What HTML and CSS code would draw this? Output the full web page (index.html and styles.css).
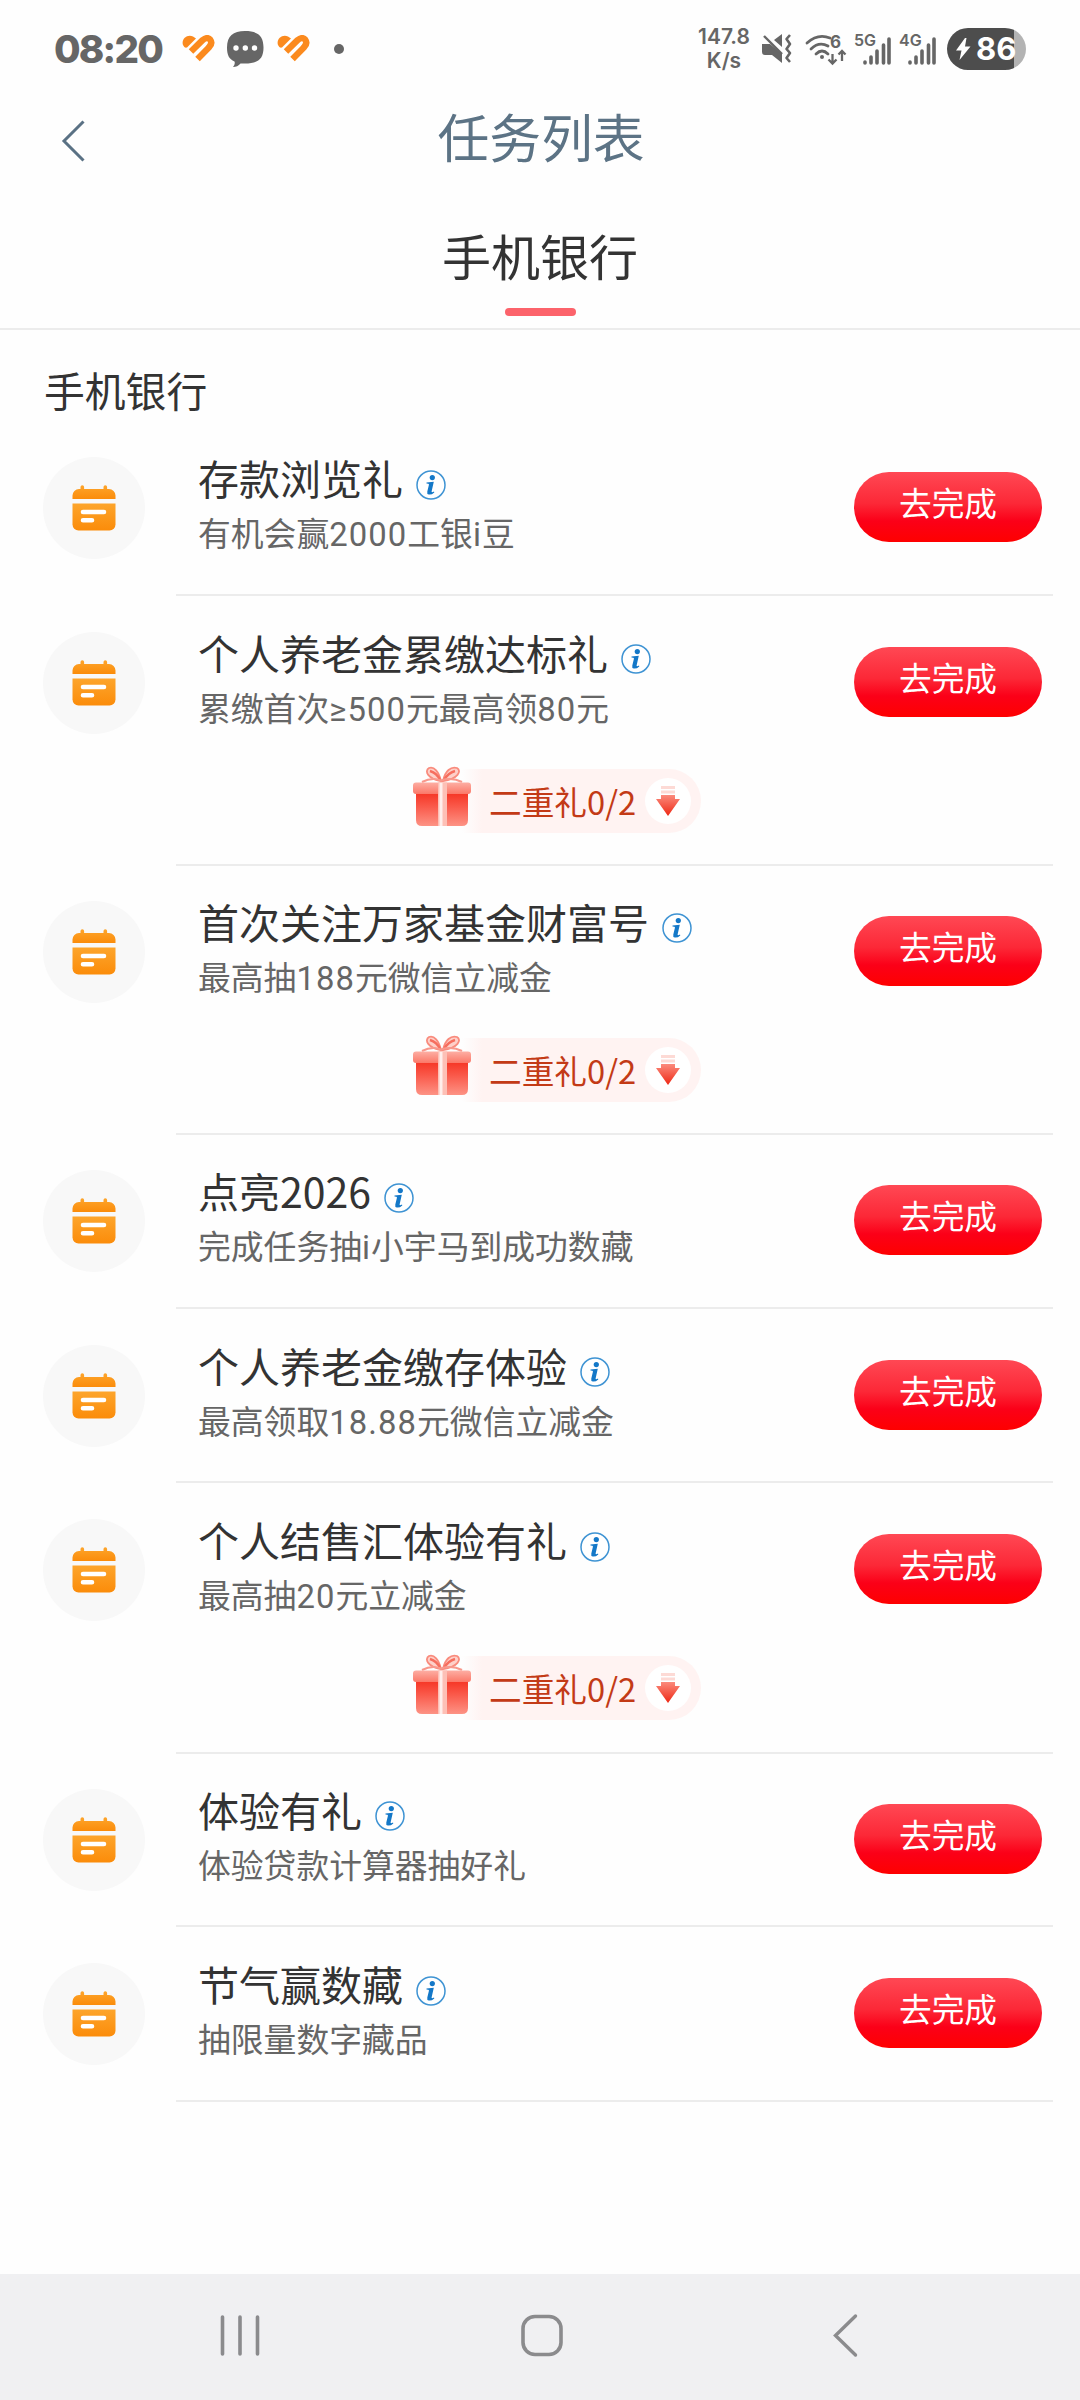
FILE: index.html
```html
<!DOCTYPE html>
<html lang="zh-CN">

<head>
    <meta charset="UTF-8">
    <meta name="viewport" content="width=device-width, initial-scale=1.0">
    <title>任务列表</title>
    <link rel="stylesheet" href="styles.css">
</head>

<body>
    <!-- 公用图标 -->
    <svg class="defs" width="0" height="0">
        <defs>
            <linearGradient id="orange" x1="0" y1="0" x2="0" y2="1">
                <stop offset="0" stop-color="#fda52c" />
                <stop offset="1" stop-color="#fb8c0a" />
            </linearGradient>
            <linearGradient id="box" x1="0" y1="0" x2="0" y2="1">
                <stop offset="0" stop-color="#f5301f" />
                <stop offset="0.45" stop-color="#fa5a4b" />
                <stop offset="1" stop-color="#fd9385" />
            </linearGradient>
            <linearGradient id="lid" x1="0" y1="0" x2="0" y2="1">
                <stop offset="0" stop-color="#fdaea3" />
                <stop offset="1" stop-color="#fb7868" />
            </linearGradient>
            <linearGradient id="arrow" x1="0" y1="0" x2="0" y2="1">
                <stop offset="0" stop-color="#fb8a7c" />
                <stop offset="1" stop-color="#ee2814" />
            </linearGradient>
        </defs>
        <symbol id="heart" viewBox="0 0 33 28">
            <path d="M1 10C-1 4 5-1 11 1.500L14 3.500 5 12.500C3 13 2 12 1 10Z" fill="#fb8a1e" />
            <path d="M9 16.500L20.500 5.200Q25.500 1.200 28.300 4.800Q30.800 8.200 27 12.200L15.500 24" fill="none" stroke="#fb8a1e" stroke-width="6.400" />
            <path d="M12.800 20.600L23 10.300" stroke="#fff" stroke-width="1.800" stroke-linecap="round" />
        </symbol>
        <symbol id="calendar" viewBox="0 0 46 46">
            <path d="M9.500 6V2a1.800 1.800 0 0 1 3.600 0V4H32.500V2a1.800 1.800 0 0 1 3.600 0V4H38a6.500 6.500 0 0 1 6.500 6.500V14H1.500V10.500A6.500 6.500 0 0 1 8 4H9.500Z" fill="url(#orange)" />
            <path d="M1.500 18.500H44.500V39.500A6 6 0 0 1 38.500 45.500H7.500A6 6 0 0 1 1.500 39.500Z" fill="url(#orange)" />
            <path d="M12 27H33M12 35.200H21" stroke="#fff" stroke-width="4.600" stroke-linecap="round" />
        </symbol>
        <symbol id="info" viewBox="0 0 30 30">
            <circle cx="15" cy="15" r="14" fill="#fff" stroke="#3e93d3" stroke-width="1.500" />
            <circle cx="16.300" cy="7.600" r="2.600" fill="#1478c8" />
            <path d="M10.500 12.600L17.800 11.800 15.600 21.500Q15.500 22.800 18 21.600L18.300 22.400Q15.500 25 12.700 24.500 10.700 24 11.300 21.500L13 14.500Q13 13.600 10.500 13.500Z" fill="#1478c8" />
        </symbol>
        <symbol id="gift" viewBox="0 0 60 62">
            <path d="M29 15C16 13 12 5 17 2C22 0 27 6 29 15ZM31 15C33 5 39 0 45 2C50 5 46 13 31 15Z" fill="#fed0c9" stroke="#f98b7d" stroke-width="1.800" />
            <path d="M18 5Q25 7 28 14M43 5Q36 7 32 14" fill="none" stroke="#f66e5e" stroke-width="2.500" />
            <path d="M10 16Q20 11 29 14.500Q40 11 50 16" fill="none" stroke="#f8988c" stroke-width="2" />
            <path d="M4 25H56V54Q56 60 50 60H10Q4 60 4 54Z" fill="url(#box)" />
            <rect x="1" y="16.500" width="58" height="11.500" rx="3" fill="url(#lid)" />
            <rect x="26" y="16.500" width="9" height="43.500" fill="#fdc0b6" />
            <path d="M29 17V60" stroke="#ffefec" stroke-width="3" />
        </symbol>
        <symbol id="down" viewBox="0 0 24 32">
            <path d="M5 1H19V4H5ZM5 5.500H19V8.500H5Z" fill="#fddad5" />
            <path d="M5 10H19V14H24L12 31 0 14H5Z" fill="url(#arrow)" />
        </symbol>
    </svg>

    <div class="status-bar">
        <div class="status-left">
            <span class="time">08:20</span>
            <svg class="heart" width="33" height="28"><use href="#heart" /></svg>
            <svg class="chat" width="37" height="37" viewBox="0 0 37 37">
                <path d="M18 0C31 0 36.500 5 36.500 16.500S31 32.500 18 32.500H13.500Q10.500 36 6 36 8.500 33 7.500 30.500C2 28 0 24 0 16.500C0 5 6 0 18 0Z" fill="#666" />
                <circle cx="9" cy="17" r="2.700" fill="#fff" />
                <circle cx="18.300" cy="17" r="2.700" fill="#fff" />
                <circle cx="27.500" cy="17" r="2.700" fill="#fff" />
            </svg>
            <svg class="heart" width="33" height="28"><use href="#heart" /></svg>
            <i class="dot"></i>
        </div>
        <div class="status-right">
            <div class="speed">147.8<br>K/s</div>
            <svg class="mute" width="30" height="30" viewBox="0 0 30 30">
                <path d="M0 10H8L20 20V29L10 21H3Q0 21 0 18ZM12 6L20 0V13Z" fill="#666" />
                <path d="M3.500 0.500L21.500 18.500" stroke="#fefefe" stroke-width="2" />
                <path d="M2 2L20 20" stroke="#666" stroke-width="2.400" />
                <path d="M28 1L24.500 5 28 10 24.500 15 28 19 24.500 24 28 28" fill="none" stroke="#666" stroke-width="2.600" stroke-linejoin="round" />
            </svg>
            <svg class="wifi" width="42" height="31" viewBox="0 0 42 31">
                <path d="M1 9Q12-1 24 4M5 15Q13 7 22 12M10 20Q16 14 22 20" fill="none" stroke="#666" stroke-width="2.800" stroke-linecap="round" />
                <circle cx="16" cy="23" r="2" fill="#666" />
                <path d="M26.500 20V29M22.500 25.500L26.500 29.500 30.500 25.500M36 27V17M32.500 20.500L36 17 39.500 20.500" fill="none" stroke="#666" stroke-width="2.300" />
                <text class="wifi-num" x="24" y="13.500">6</text>
            </svg>
            <div class="signals">
                <svg width="37" height="33" viewBox="0 0 37 33">
                    <text class="signal-txt" x="0" y="13">5G</text>
                    <path d="M11 29V30M17 24V30M23 18V30M29.500 12V30M35 6V30" stroke="#666" stroke-width="3.600" stroke-linecap="round" />
                </svg>
                <svg width="37" height="33" viewBox="0 0 37 33">
                    <text class="signal-txt" x="0" y="13">4G</text>
                    <path d="M11 29V30M17 24V30M23 18V30M29.500 12V30M35 6V30" stroke="#666" stroke-width="3.600" stroke-linecap="round" />
                </svg>
            </div>
            <div class="battery">
                <svg width="15" height="23" viewBox="0 0 15 23"><path d="M9 0L0 12.500H5.500L3.500 22 14.500 8.500H9L10.500 0Z" fill="#fff" /></svg>
                <span>86</span>
            </div>
        </div>
    </div>

    <div class="header">
        <svg class="back" width="26" height="44" viewBox="0 0 26 44"><path d="M22.500 2.500L3 22 22.500 41.500" fill="none" stroke="#5a7184" stroke-width="3" /></svg>
        <h1>任务列表</h1>
    </div>

    <div class="tab">
        <span>手机银行</span>
    </div>

    <h2 class="section-title">手机银行</h2>

    <ul class="list" id="list"></ul>

    <div class="nav-bar">
        <svg width="42" height="44" viewBox="0 0 42 44"><path d="M3.500 3V40M21 3V40M38.500 3V40" stroke="#8b8b8d" stroke-width="3.600" stroke-linecap="round" /></svg>
        <svg width="42" height="44" viewBox="0 0 42 44"><rect x="2" y="2.500" width="38" height="38" rx="12" fill="none" stroke="#8b8b8d" stroke-width="3.600" /></svg>
        <svg width="42" height="44" viewBox="0 0 42 44"><path d="M32.500 2L12.500 21.500 32.500 41" fill="none" stroke="#8b8b8d" stroke-width="3.400" stroke-linecap="round" /></svg>
    </div>

    <script src="main.js"></script>
</body>

</html>
```
FILE: styles.css
```css
* {
    margin: 0;
    padding: 0;
    box-sizing: border-box;
}

body {
    display: flex;
    flex-direction: column;
    width: 1080px;
    height: 2400px;
    background-color: #fefefe;
    font-family: Roboto, "Noto Sans CJK SC", sans-serif;
    color: #333;
    overflow: hidden;
}

svg {
    display: block;
    flex: none;
    overflow: visible;
}

.defs {
    position: absolute;
}

/*状态栏*/
.status-bar {
    display: flex;
    justify-content: space-between;
    height: 98px;
    padding: 0 14px 0 54px;
    color: #666;
}

.status-left,
.status-right {
    display: flex;
    align-items: center;
    height: 98px;
}

.time {
    width: 128px;
    font: 800 38.500px/98px Inter, sans-serif;
    letter-spacing: -1.800px;
}

.chat {
    margin: 0 13px 0 12px;
}

.dot {
    width: 10px;
    height: 10px;
    margin-left: 24px;
    border-radius: 50%;
    background-color: #666;
}

.status-right {
    width: 368px;
}

.speed {
    width: 52px;
    font: 600 21px/24px Inter, sans-serif;
    text-align: center;
}

.mute {
    margin-left: 12px;
}

.wifi {
    margin-left: 14px;
}

.wifi-num {
    font: 700 17px Inter, sans-serif;
    fill: #666;
}

.signals {
    display: flex;
    gap: 8px;
    margin-left: 6px;
}

.signal-txt {
    font: 600 16px Inter, sans-serif;
    fill: #666;
}

.battery {
    display: flex;
    align-items: center;
    width: 79px;
    height: 42px;
    margin-left: 11px;
    padding-left: 9px;
    border-radius: 21px;
    background: linear-gradient(90deg, #4d4d4d 67px, #b3b3b3 67px);
    color: #fff;
}

.battery span {
    margin-left: 5px;
    font: 700 31px/42px Inter, sans-serif;
}

/*头部*/
.header {
    display: flex;
    align-items: center;
    height: 84px;
    padding: 1px 0 0 61px;
}

.header h1 {
    width: 908px;
    font-size: 51.800px;
    font-weight: 400;
    line-height: 84px;
    color: #5c7385;
    text-align: center;
}

.tab {
    display: flex;
    flex-direction: column;
    align-items: center;
    height: 148px;
    padding-top: 38px;
    border-bottom: 2px solid #ececec;
    font-size: 49px;
    line-height: 80px;
}

.tab::after {
    content: "";
    width: 71px;
    height: 8px;
    margin-top: 8px;
    border-radius: 4px;
    background-color: #fc636b;
}

.section-title {
    height: 91px;
    padding: 33px 0 0 44px;
    font-size: 40.800px;
    font-weight: 400;
    line-height: 60px;
}

/*任务列表*/
.list {
    flex: 1;
    list-style: none;
}

.item {
    display: flex;
    height: 174.600px;
    padding-left: 43px;
}

.item.has-gift {
    height: 269.300px;
}

.item .icon {
    display: flex;
    align-items: center;
    justify-content: center;
    width: 102px;
    height: 102px;
    margin: 36px 31px 0 0;
    border-radius: 50%;
    background-color: #f8f8f8;
}

.item .main {
    width: 877px;
    border-bottom: 2px solid #ececec;
}

/*有礼盒的行分割线略低*/
.item.has-gift .main {
    height: 270.300px;
}

.item .row {
    display: flex;
    justify-content: space-between;
    padding: 31px 11px 0 22px;
}

.item .name {
    display: flex;
    align-items: center;
    gap: 13px;
    height: 50px;
    margin-bottom: 5px;
    font-family: "Noto Sans CJK SC", sans-serif;
    font-size: 41px;
    font-weight: 400;
    line-height: 50px;
}

.item .name svg {
    margin-top: 15px;
}

.item .desc {
    height: 56px;
    font-size: 32.800px;
    line-height: 56px;
    color: #666;
}

.item .desc span {
    letter-spacing: 1.100px;
}

.item .btn {
    width: 188px;
    height: 70px;
    margin-top: 20px;
    padding-bottom: 3px;
    border: none;
    border-radius: 35px;
    background: linear-gradient(#ff4854, #fc2837 45%, #fb0018 70%, #fe0000);
    color: #fff;
    font: 32.700px/67px Roboto, "Noto Sans CJK SC", sans-serif;
}

.gift {
    display: flex;
    align-items: center;
    width: 289px;
    height: 64px;
    margin: 31px 0 0 236px;
    background: linear-gradient(90deg, transparent 50px, #fff3f2 70px);
    border-radius: 32px;
    color: #c33a16;
    font-family: "Noto Sans CJK SC", sans-serif;
    font-size: 32.700px;
    line-height: 64px;
}

.gift .box {
    margin: -7px 17px 0 0;
}

.gift .down {
    display: flex;
    align-items: center;
    justify-content: center;
    width: 46px;
    height: 46px;
    margin-left: 9px;
    border-radius: 50%;
    background-color: #fff;
}

/*底部导航*/
.nav-bar {
    display: flex;
    align-items: center;
    gap: 260px;
    height: 126px;
    padding: 0 0 2px 219px;
    background-color: #f0f0f2;
}
```
FILE: main.js
```js
var tasks = [
    { name: '存款浏览礼', desc: '有机会赢2000工银i豆' },
    { name: '个人养老金累缴达标礼', desc: '累缴首次≥500元最高领80元', gift: '二重礼0/2' },
    { name: '首次关注万家基金财富号', desc: '最高抽188元微信立减金', gift: '二重礼0/2' },
    { name: '点亮2026', desc: '完成任务抽i小宇马到成功数藏' },
    { name: '个人养老金缴存体验', desc: '最高领取18.88元微信立减金' },
    { name: '个人结售汇体验有礼', desc: '最高抽20元立减金', gift: '二重礼0/2' },
    { name: '体验有礼', desc: '体验贷款计算器抽好礼' },
    { name: '节气赢数藏', desc: '抽限量数字藏品' }
];

function icon(id, w, h) {
    return '<svg width="' + w + '" height="' + h + '"><use href="#' + id + '" /></svg>';
}

var html = '';
tasks.forEach(function (task) {
    // 数字和字母单独加字间距
    var desc = task.desc.replace(/[≥\w.]+/g, '<span>$&</span>');
    html += '<li class="item' + (task.gift ? ' has-gift' : '') + '">' +
        '<div class="icon">' + icon('calendar', 46, 46) + '</div>' +
        '<div class="main"><div class="row"><div>' +
        '<h3 class="name">' + task.name + icon('info', 30, 30) + '</h3>' +
        '<p class="desc">' + desc + '</p></div>' +
        '<button class="btn">去完成</button></div>';
    // 有多重礼的任务多显示一行
    if (task.gift) {
        html += '<div class="gift"><div class="box">' + icon('gift', 60, 62) + '</div>' +
            '<span>' + task.gift + '</span>' +
            '<div class="down">' + icon('down', 24, 32) + '</div></div>';
    }
    html += '</div></li>';
});
document.getElementById('list').innerHTML = html;
```
